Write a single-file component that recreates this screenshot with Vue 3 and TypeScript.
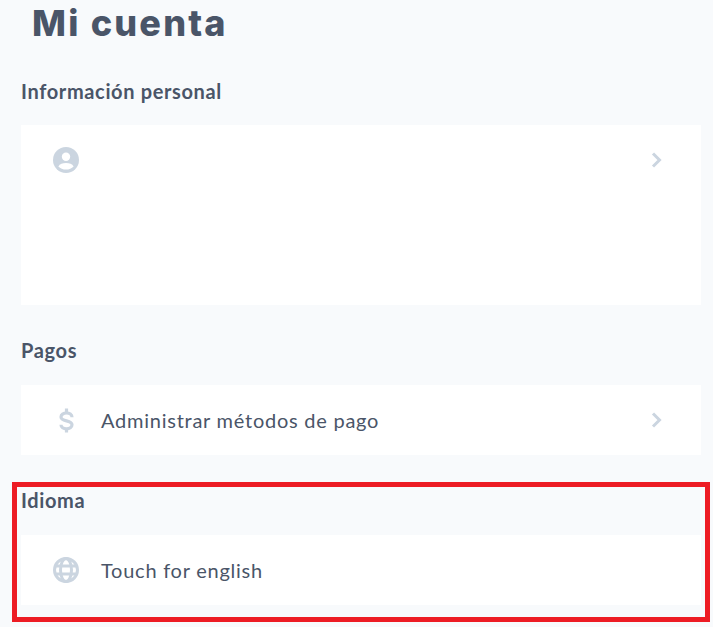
<script setup lang="ts">
</script>

<template>
  <div class="page">
    <h1 class="title">Mi cuenta</h1>

    <section class="section">
      <h2 class="heading">Información personal</h2>
      <div class="card tall">
        <div class="row">
          <span class="icon">
            <svg width="26" height="26" viewBox="0 0 26 26">
              <circle cx="13" cy="13" r="13" fill="#cbd5e0" />
              <circle cx="13" cy="9.800" r="4.200" fill="#fff" />
              <path d="M5.400 19.400C6.800 17 9.600 16 13 16s6.200 1 7.600 3.400C18.800 21.400 16 22.600 13 22.600s-5.800-1.200-7.600-3.200z" fill="#fff" />
            </svg>
          </span>
          <span class="label"></span>
          <svg class="chevron" width="12" height="18" viewBox="0 0 12 18">
            <path d="M2 2.500l6.500 6.500L2 15.500" fill="none" stroke="#cbd5e0" stroke-width="3" />
          </svg>
        </div>
      </div>
    </section>

    <section class="section">
      <h2 class="heading">Pagos</h2>
      <div class="card">
        <div class="row">
          <span class="icon">
            <svg width="15" height="25" viewBox="0 0 15 25">
              <path d="M13 9.200C13 6.600 10.600 5 7.500 5 4.400 5 2 6.500 2 9c0 5.200 11 2.600 11 7.800 0 2.500-2.400 4-5.500 4-3.100 0-5.500-1.500-5.500-4.100" fill="none" stroke="#cbd5e0" stroke-width="3.200" />
              <path d="M7.500 0.500V5M7.500 20.500v4" stroke="#cbd5e0" stroke-width="3.200" />
            </svg>
          </span>
          <span class="label">Administrar métodos de pago</span>
          <svg class="chevron" width="12" height="18" viewBox="0 0 12 18">
            <path d="M2 2.500l6.500 6.500L2 15.500" fill="none" stroke="#cbd5e0" stroke-width="3" />
          </svg>
        </div>
      </div>
    </section>

    <section class="section lang">
      <h2 class="heading">Idioma</h2>
      <div class="card">
        <div class="row">
          <span class="icon">
            <svg width="26" height="26" viewBox="0 0 26 26" fill="none" stroke="#cbd5e0" stroke-width="3">
              <circle cx="13" cy="13" r="11.500" />
              <ellipse cx="13" cy="13" rx="5.500" ry="11.500" />
              <path d="M2 9h22M2 17h22" />
            </svg>
          </span>
          <span class="label">Touch for english</span>
        </div>
      </div>
      <div class="highlight"></div>
    </section>
  </div>
</template>

<style scoped>
.page {
  width: 713px;
  height: 627px;
  box-sizing: border-box;
  overflow: hidden;
  background: #f8fafc;
  padding: 0 12px 0 21px;
  font-family: Lato, "Liberation Sans", sans-serif;
  color: #4a5568;
}
.title {
  margin: 0 0 0 11px;
  height: 46px;
  line-height: 46px;
  font-family: Inter, "Open Sans", sans-serif;
  font-size: 36px;
  font-weight: 800;
  letter-spacing: 2.2px;
  color: #4a5568;
}
.section {
  display: flex;
  flex-direction: column;
  padding-top: 30px;
}
.heading {
  margin: 0 0 19px;
  height: 30px;
  line-height: 30px;
  font-size: 20px;
  font-weight: 700;
  letter-spacing: 0.64px;
  color: #4a5568;
}
.section + .section .heading {
  height: 31px;
}
.card {
  background: #fff;
  height: 70px;
}
.card.tall {
  height: 180px;
}
.row {
  display: flex;
  align-items: center;
  height: 70px;
  padding: 0 38px 0 32px;
}
.icon {
  width: 26px;
  height: 26px;
  display: flex;
  align-items: center;
  justify-content: center;
  flex: none;
}
.label {
  flex: 1;
  margin-left: 22px;
  font-size: 20px;
  line-height: 72px;
  letter-spacing: 0.75px;
  color: #4a5568;
}
.chevron {
  flex: none;
}
.lang {
  position: relative;
}
.highlight {
  position: absolute;
  left: -9px;
  top: 27px;
  width: 698px;
  height: 140px;
  box-sizing: border-box;
  border: 5px solid #ed1c24;
  pointer-events: none;
}
</style>
